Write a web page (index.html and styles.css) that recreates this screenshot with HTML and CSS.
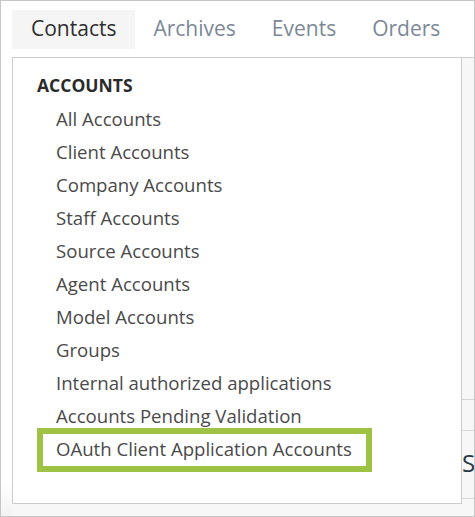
FILE: index.html
```html
<!DOCTYPE html>
<html lang="en">
<head>
  <meta charset="UTF-8" />
  <meta name="viewport" content="width=device-width, initial-scale=1.0" />
  <title>Contacts</title>
  <link rel="stylesheet" href="styles.css">
</head>
<body>
  <div class="frame">
    <nav class="tabs">
      <a class="tab active" href="#">Contacts</a>
      <a class="tab" href="#">Archives</a>
      <a class="tab" href="#">Events</a>
      <a class="tab" href="#">Orders</a>
    </nav>

    <div class="sheet">
      <div class="sheet-row first"></div>
      <div class="sheet-row"></div>
      <div class="sheet-row tall"><span class="sheet-label">Search</span></div>
    </div>

    <div class="menu">
      <h3 class="menu-title">ACCOUNTS</h3>
      <ul class="menu-list">
        <li><a href="#">All Accounts</a></li>
        <li><a href="#">Client Accounts</a></li>
        <li><a href="#">Company Accounts</a></li>
        <li><a href="#">Staff Accounts</a></li>
        <li><a href="#">Source Accounts</a></li>
        <li><a href="#">Agent Accounts</a></li>
        <li><a href="#">Model Accounts</a></li>
        <li><a href="#">Groups</a></li>
        <li><a href="#">Internal authorized applications</a></li>
        <li><a href="#">Accounts Pending Validation</a></li>
        <li class="highlight"><a href="#">OAuth Client Application Accounts</a></li>
      </ul>
    </div>
  </div>
</body>
</html>
```

FILE: styles.css
```css
body {
  margin: 0;
  font-family: "Open Sans", "Noto Sans", sans-serif;
  background: #fff;
}
.frame {
  position: relative;
  width: 475px;
  height: 517px;
  box-sizing: border-box;
  border: 1px solid #c6c6c6;
  overflow: hidden;
  background: linear-gradient(to bottom, #fff 480px, #f3f3f3);
}
.tabs {
  display: flex;
  margin: 9px 0 0 11px;
}
.tab {
  padding: 0 18px 3px;
  line-height: 36px;
  font-size: 21px;
  color: #7c8897;
  text-decoration: none;
}
.tab.active {
  background: #f5f5f5;
  color: #2e2e2e;
  padding: 0 19px 3px;
}
.sheet {
  margin: 8px 0 0 11px;
  border-top: 1px solid #cccccc;
  background: #f7f7f7;
  height: 460px;
}
.sheet-row {
  height: 30px;
  border-bottom: 1px solid #d6d6d6;
}
.sheet-row.first {
  height: 341px;
}
.sheet-row.tall {
  height: 67px;
  line-height: 64px;
  padding-left: 450px;
  font-size: 24px;
  color: #263746;
  white-space: nowrap;
}
.menu {
  position: absolute;
  left: 11px;
  top: 56px;
  width: 450px;
  height: 447px;
  box-sizing: border-box;
  border: 1px solid #cccccc;
  background: #fff;
  padding: 11px 0 0 24px;
}
.menu-title {
  margin: 0;
  font-size: 17.5px;
  font-weight: 700;
  line-height: 33px;
  color: #2b2b2b;
}
.menu-list {
  list-style: none;
  margin: 0;
  padding: 0;
}
.menu-list li {
  line-height: 33px;
  padding-left: 19px;
  font-size: 18.6px;
}
.menu-list a {
  color: #4a4a4a;
  text-decoration: none;
}
.menu-list li.highlight {
  display: inline-block;
  margin-top: -4px;
  padding: 0 14px 2px 13px;
  line-height: 30px;
  border: 6px solid #9dc244;
}
```
